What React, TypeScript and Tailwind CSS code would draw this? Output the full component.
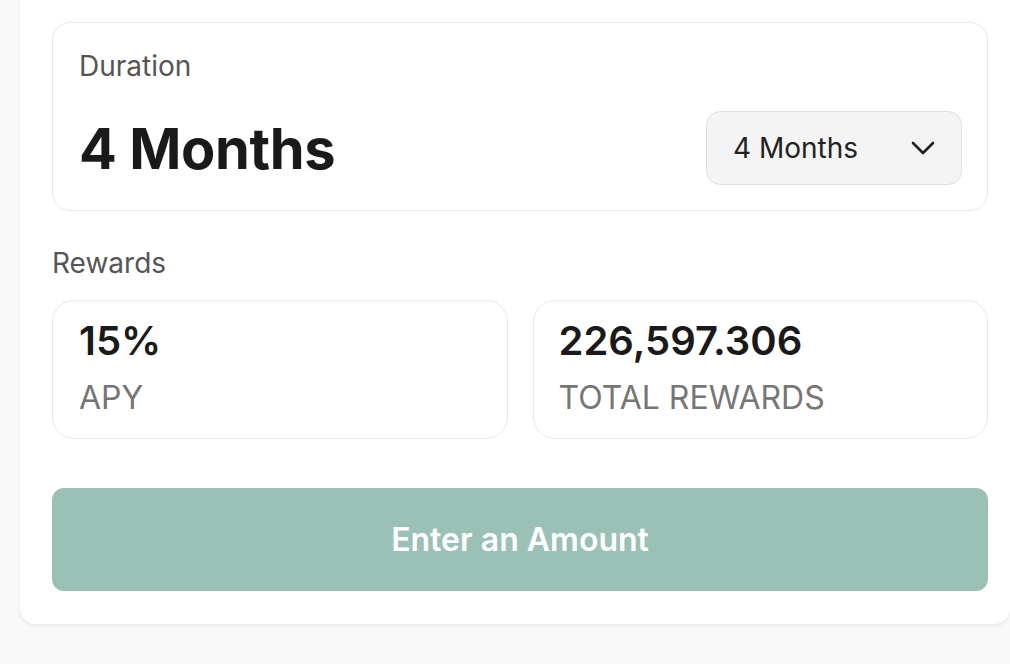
import React from "react";

export default function App() {
  return (
    <div className="w-[1010px] h-[664px] bg-[#f9f9f9] overflow-hidden font-['Inter',sans-serif]">
      <div className="ml-[20px] w-[990px] bg-white rounded-b-[16px] shadow-[0_2px_4px_rgba(0,0,0,0.07)] pl-[32px] pr-[22px] pt-[22px] pb-[33px]">
        {/* Duration box */}
        <div className="border border-[#e8e8e8] rounded-[18px] pt-[27px] pb-[25px] pl-[26px] pr-[25px]">
          <div className="text-[28px] leading-[32px] text-[#555555]">Duration</div>
          <div className="mt-[29px] flex items-center justify-between">
            <div className="text-[56px] leading-none font-bold text-[#1a1a1a] tracking-[-0.4px] translate-y-[1px]">4 Months</div>
            <div className="w-[256px] h-[74px] bg-[#f4f4f4] border border-[#dedede] rounded-[14px] pl-[26px] pr-[26px] flex items-center justify-between">
              <span className="text-[28px] text-[#222222]">4 Months</span>
              <svg width="24" height="14" viewBox="0 0 24 14" fill="none">
                <path d="M2 2 L12 12 L22 2" stroke="#1f1f1f" strokeWidth="2.6" strokeLinecap="round" strokeLinejoin="round" />
              </svg>
            </div>
          </div>
        </div>

        {/* Rewards */}
        <div className="mt-[36px] text-[28px] leading-[32px] text-[#555555]">Rewards</div>
        <div className="mt-[21px] grid grid-cols-2 gap-[25px]">
          <div className="border border-[#e8e8e8] rounded-[22px] pl-[26px] pt-[16px] pb-[22px]">
            <div className="text-[40px] leading-[48px] font-semibold text-[#1a1a1a]">15%</div>
            <div className="mt-[15px] text-[32px] leading-[36px] text-[#767676]">APY</div>
          </div>
          <div className="border border-[#e8e8e8] rounded-[22px] pl-[25px] pt-[16px] pb-[22px]">
            <div className="text-[40px] leading-[48px] font-semibold text-[#1a1a1a]">226,597.306</div>
            <div className="mt-[15px] text-[32px] leading-[36px] text-[#767676]">TOTAL REWARDS</div>
          </div>
        </div>

        {/* Button */}
        <button className="mt-[49px] w-full h-[103px] rounded-[12px] bg-[#9bc1b7] text-white text-[32px] font-semibold flex items-center justify-center">
          Enter an Amount
        </button>
      </div>
    </div>
  );
}
